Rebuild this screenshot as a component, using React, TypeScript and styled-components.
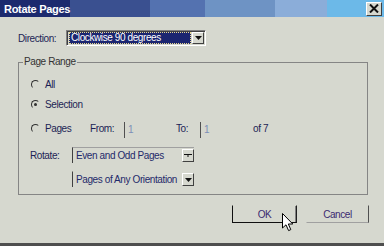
import styled, { createGlobalStyle } from 'styled-components';

const GlobalStyle = createGlobalStyle`
    html, body {
        margin: 0;
        padding: 0;
        background: #d6d8cf;
    }
    * {
        box-sizing: border-box;
    }
`;

const font = `
    font-family: 'Liberation Sans', Arial, sans-serif;
    font-size: 10px;
    letter-spacing: -0.4px;
`;

const Dialog = styled.div`
    width: 384px;
    height: 246px;
    background: #d6d8cf;
    border-bottom: 3px solid #4e4e4e;
    display: flex;
    flex-direction: column;
    ${font}
    color: #1c1f55;
`;

const TitleBar = styled.div`
    height: 17px;
    display: flex;
    align-items: center;
    justify-content: space-between;
    padding: 0 2px 0 4px;
    background: linear-gradient(
        to right,
        #1c2a6e 0,
        #1c2a6e 70px,
        #3a5090 70px,
        #3a5090 150px,
        #5472b0 150px,
        #5472b0 205px,
        #6e93c4 205px,
        #6e93c4 275px,
        #8badd9 275px,
        #8badd9 327px,
        #6cb9e8 327px
    );
`;

const Title = styled.span`
    color: #fff;
    font-weight: bold;
    font-size: 11px;
    letter-spacing: -0.3px;
`;

const CloseButton = styled.div`
    width: 16px;
    height: 14px;
    display: flex;
    align-items: center;
    justify-content: center;
    background: #d6d8cf;
    border: 1px solid;
    border-color: #fff #404040 #404040 #fff;
`;

const Body = styled.div`
    display: flex;
    flex-direction: column;
    padding: 13px 15px 0 18px;
`;

const Row = styled.div`
    display: flex;
    align-items: center;
    height: 16px;
`;

const Label = styled.span<{ $width: number }>`
    width: ${({ $width }) => $width}px;
    flex: none;
    white-space: nowrap;
`;

const Text = styled.span`
    white-space: nowrap;
`;

const Combo = styled.div`
    width: 140px;
    height: 16px;
    display: flex;
    align-items: stretch;
    border: 1px solid;
    border-color: #808080 #fff #fff #808080;
    box-shadow: inset 1px 1px 0 #404040;
    padding: 1px 1px 1px 2px;
`;

const ComboValue = styled.div`
    flex: 1;
    background: #1b2570;
    color: #fff;
    outline: 1px dotted #e8d890;
    outline-offset: -1px;
    padding-left: 2px;
    line-height: 12px;
    margin-right: 1px;
`;

const ArrowButton = styled.div`
    width: 12px;
    flex: none;
    display: flex;
    align-items: center;
    justify-content: center;
    background: #d6d8cf;
    border: 1px solid;
    border-color: #fff #404040 #404040 #fff;
`;

const Group = styled.fieldset`
    width: 350px;
    margin: 10px 0 0;
    padding: 0 0 7px 4px;
    border: 1px solid #858585;
    display: flex;
    flex-direction: column;
`;

const Legend = styled.legend`
    padding: 0 1px;
    line-height: 12px;
    color: #333;
`;

const RadioRow = styled.div<{ $top: number }>`
    display: flex;
    align-items: center;
    height: 20px;
    margin-top: ${({ $top }) => $top}px;
    padding-left: 8px;
`;

const Radio = styled.span<{ $checked?: boolean }>`
    width: 9px;
    height: 9px;
    flex: none;
    margin-right: 5px;
    border-radius: 50%;
    border: 1px solid;
    border-color: #303030 #d6d8cf #d6d8cf #303030;
    display: flex;
    align-items: center;
    justify-content: center;

    &::after {
        content: '';
        width: 3px;
        height: 3px;
        border-radius: 50%;
        background: ${({ $checked }) => ($checked ? '#303030' : 'transparent')};
    }
`;

const PageField = styled.span<{ $width: number }>`
    width: ${({ $width }) => $width}px;
    flex: none;
    height: 16px;
    line-height: 15px;
    border-left: 1px solid #505050;
    padding-left: 3px;
    color: #7d8fb8;
    margin-top: 4px;
`;

const SelectRow = styled.div<{ $top: number; $indent: number }>`
    display: flex;
    align-items: center;
    height: 16px;
    margin-top: ${({ $top }) => $top}px;
    padding-left: ${({ $indent }) => $indent}px;
`;

const Select = styled.div<{ $topEdge?: boolean }>`
    width: 122px;
    height: 16px;
    display: flex;
    align-items: stretch;
    border-left: 1px solid #404040;
    border-top: 1px solid ${({ $topEdge }) => ($topEdge ? '#a0a0a0' : 'transparent')};
    padding: 1px 0 1px 3px;
`;

const SelectValue = styled.div`
    flex: 1;
    line-height: 13px;
    color: #1f2a6a;
    white-space: nowrap;
    overflow: hidden;
`;

const Buttons = styled.div`
    display: flex;
    justify-content: flex-end;
    gap: 9px;
    margin-top: 10px;
`;

const Button = styled.div<{ $primary?: boolean }>`
    position: relative;
    width: ${({ $primary }) => ($primary ? 65 : 63)}px;
    height: 18px;
    display: flex;
    align-items: center;
    justify-content: center;
    color: #3a2a70;
    border: 1px solid;
    border-color: ${({ $primary }) =>
        $primary ? 'transparent #202020 #101010 #101010' : 'transparent #505050 #a0a0a0 transparent'};
    ${({ $primary }) => $primary && 'box-shadow: inset -1px 0 0 #808080;'}
`;

const Cursor = styled.div`
    position: absolute;
    left: 49px;
    top: 7px;
    line-height: 0;
`;

function Triangle() {
    return (
        <svg width="7" height="4" viewBox="0 0 7 4">
            <path d="M0 0 H7 L3.5 4 Z" fill="#111" />
        </svg>
    );
}

export default function App() {
    return (
        <Dialog>
            <GlobalStyle />
            <TitleBar>
                <Title>Rotate Pages</Title>
                <CloseButton>
                    <svg width="10" height="9" viewBox="0 0 10 9">
                        <path d="M1 0.5 L9 8.5 M9 0.5 L1 8.5" stroke="#111" strokeWidth="2" />
                    </svg>
                </CloseButton>
            </TitleBar>
            <Body>
                <Row>
                    <Label $width={48}>Direction:</Label>
                    <Combo>
                        <ComboValue>Clockwise 90 degrees</ComboValue>
                        <ArrowButton>
                            <Triangle />
                        </ArrowButton>
                    </Combo>
                </Row>
                <Group>
                    <Legend>Page Range</Legend>
                    <RadioRow $top={6}>
                        <Radio />
                        <Text>All</Text>
                    </RadioRow>
                    <RadioRow $top={0}>
                        <Radio $checked />
                        <Text>Selection</Text>
                    </RadioRow>
                    <RadioRow $top={4}>
                        <Radio />
                        <Label $width={45}>Pages</Label>
                        <Label $width={34}>From:</Label>
                        <PageField $width={52}>1</PageField>
                        <Label $width={24}>To:</Label>
                        <PageField $width={53}>1</PageField>
                        <Text>of 7</Text>
                    </RadioRow>
                    <SelectRow $top={9} $indent={7}>
                        <Label $width={42}>Rotate:</Label>
                        <Select $topEdge>
                            <SelectValue>Even and Odd Pages</SelectValue>
                            <ArrowButton>
                                <svg width="8" height="5" viewBox="0 0 8 5">
                                    <path d="M0 1.5 H8 M4 1.5 V4" stroke="#111" strokeWidth="1" />
                                </svg>
                            </ArrowButton>
                        </Select>
                    </SelectRow>
                    <SelectRow $top={8} $indent={49}>
                        <Select>
                            <SelectValue>Pages of Any Orientation</SelectValue>
                            <ArrowButton>
                                <Triangle />
                            </ArrowButton>
                        </Select>
                    </SelectRow>
                </Group>
                <Buttons>
                    <Button $primary>
                        OK
                        <Cursor>
                            <svg width="12" height="19" viewBox="0 0 12 19">
                                <path
                                    d="M0.5 0.5 L0.5 15 L4 11.8 L6.6 17.6 L8.8 16.6 L6.3 11 L10.8 11 Z"
                                    fill="#fff"
                                    stroke="#000"
                                    strokeWidth="1"
                                />
                            </svg>
                        </Cursor>
                    </Button>
                    <Button>Cancel</Button>
                </Buttons>
            </Body>
        </Dialog>
    );
}
